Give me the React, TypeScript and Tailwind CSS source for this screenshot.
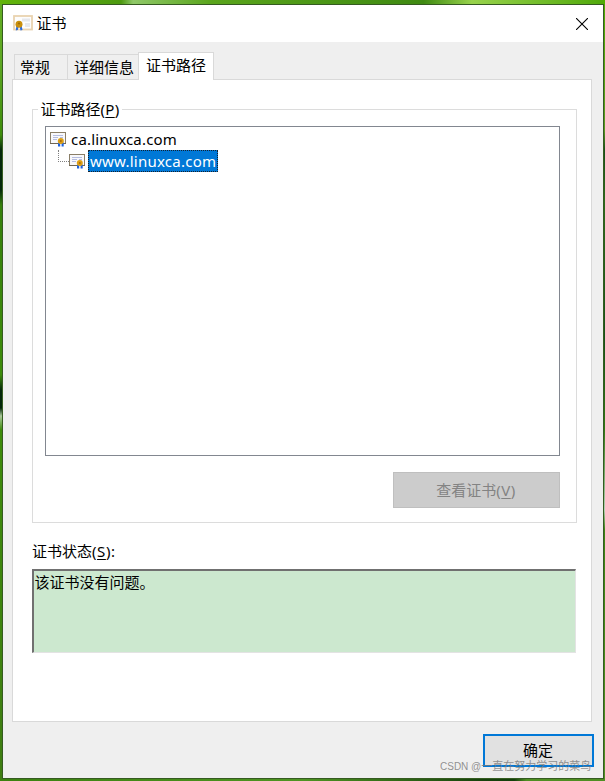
import React from "react";

const Seal = ({ x, y }: { x: number; y: number }) => (
  <g transform={`translate(${x} ${y})`}>
    <path d="M-2.8 1.5V5.5H-.6V2H.8V5.5H2.9V1.5Z" fill="#1d62df" />
    <circle r="3" fill="#dd9f14" />
    <circle r="1" fill="#a86a0c" />
  </g>
);

const TreeIcon = () => (
  <svg width="17" height="15" viewBox="0 0 17 15" className="shrink-0">
    <rect x="0.5" y="0.5" width="15" height="11" fill="#f8f8fb" stroke="#8a7e67" />
    <path d="M0 11.5h16" stroke="#6f6552" />
    <path d="M3 3.5h10M3 5.5h5M10 5.5h3M3 7.5h4" stroke="#b5bde0" />
    <Seal x={10.8} y={9} />
  </svg>
);

const TitleIcon = () => (
  <svg width="20" height="17" viewBox="0 0 20 17" className="shrink-0">
    <rect x="1" y="1" width="18" height="13.5" fill="#fdfdfd" stroke="#e9d3b0" strokeWidth="1.8" />
    <path d="M9 3.5h8v3H9zM12 8h5v4h-5z" fill="#e6e8ec" />
    <path d="M3.5 10L2.8 15.5l2-.5.7-3h1.2l.8 3.5 2-.5L8.5 10z" fill="#2b6de0" />
    <circle cx="6" cy="9.2" r="3.5" fill="#c98f0c" />
    <circle cx="6" cy="8.5" r="1.1" fill="#9e6d08" />
  </svg>
);

export default function App() {
  return (
    <div className="relative h-[781px] w-[605px] overflow-hidden bg-[linear-gradient(180deg,#62ad22_0px,#5fa823_60px,#3d8b0a_135px,#04280a_150px,#04280a_190px,#36800b_205px,#3d8b0a_375px,#04280a_390px,#04280a_408px,#a9c99a_416px,#3d8b0a_430px,#3f7d12_781px)] font-['Noto_Sans','Noto_Sans_CJK_SC',sans-serif] text-[15px] leading-5 text-black">
      <div className="absolute top-0 left-0 h-1 w-full bg-[linear-gradient(90deg,#62b50b,#4d9a10_20%,#8fc868_22%,#5aa51c_35%,#3f8a12_70%,#98d34c_78%,#4fa80a)]" />
      <div className="absolute top-0 right-0 h-full w-[2px] bg-[linear-gradient(180deg,#4fae00_0px,#5a9a20_130px,#175018_150px,#2d6b1a_200px,#175018_340px,#317a12_430px,#b5cfb5_510px,#3c8512_530px,#529024_781px)]" />
      <div className="absolute bottom-0 left-0 h-[2px] w-full bg-[linear-gradient(90deg,#3b8110,#4e9422_50%,#16420d_80%,#13400b_85%,#4e8e22_87%)]" />

      <div className="relative ml-[2px] flex h-[779px] w-[602px] flex-col pt-1">
        <div className="flex h-[775px] flex-col border border-[#355b21] bg-[#efefef]">
          <header className="flex h-[37px] shrink-0 items-center bg-white pr-[15px] pl-[10px]">
            <TitleIcon />
            <span className="mb-[2px] ml-[3.5px]">证书</span>
            <svg width="12" height="12" viewBox="0 0 12 12" className="ml-auto">
              <path d="M0 0L12 12M12 0L0 12" stroke="#000" strokeWidth="1.1" />
            </svg>
          </header>

          <nav className="relative z-10 mt-[10px] -mb-px ml-[11px] flex h-7 shrink-0 items-end">
            <div className="mb-px h-[25px] w-[53px] border-t border-l border-[#d9d9d9] pt-[2px] pl-[5px]">常规</div>
            <div className="mb-px h-[25px] w-[71px] border-t border-l border-[#d9d9d9] pt-[2px] pl-[6px] whitespace-nowrap">详细信息</div>
            <div className="h-7 w-[76px] border border-b-0 border-[#d9d9d9] bg-white pt-[2px] pl-[7px] whitespace-nowrap">证书路径</div>
          </nav>

          <main className="ml-[9px] h-[643px] w-[580px] shrink-0 border border-[#d9d9d9] bg-white pl-[19px]">
            <fieldset className="mt-[19px] h-[424px] w-[545px] border-0">
              <div className="h-[10px]" />
              <div className="h-[414px] border border-[#dcdcdc] px-3">
                <div className="-mt-[11px] -ml-[7px] flex h-[27px] items-start">
                  <span className="bg-white pr-[2px] pl-[2.5px] whitespace-nowrap">
                    证书路径<span className="tracking-[0.3px]">(<u className="underline-offset-2">P</u>)</span>
                  </span>
                </div>
                <div className="h-[330px] w-[515px] border border-[#828790] bg-white pt-[2px] pl-1">
                  <div className="flex h-[21px] items-center">
                    <TreeIcon />
                    <span className="mb-px ml-1 tracking-[0.18px]">ca.linuxca.com</span>
                  </div>
                  <div className="flex h-[22px] items-center">
                    <div className="mb-[10px] ml-2 h-[12px] w-[11px] border-b border-l border-dotted border-[#808080]" />
                    <TreeIcon />
                    <span className="ml-[2px] flex h-[22px] w-[130px] items-center border border-dotted border-[#16202c] bg-[#0078d7] pb-px pl-px tracking-[0.24px] whitespace-nowrap text-white">
                      www.linuxca.com
                    </span>
                  </div>
                </div>
                <button className="mt-4 ml-[348px] block h-9 w-[167px] border border-[#bfbfbf] bg-[#cccccc] pr-[1px] text-[#838383]">
                  查看证书<span className="tracking-[0.5px]">(<u className="underline-offset-2">V</u>)</span>
                </button>
              </div>
            </fieldset>
            <div className="mt-[18px] h-[28px]">
              证书状态<span className="tracking-[0.55px]">(<u className="underline-offset-2">S</u>):</span>
            </div>
            <div className="h-[84px] w-[544px] border-t-2 border-r border-b border-l-2 border-t-[#707070] border-r-[#e3e3e3] border-b-[#e3e3e3] border-l-[#707070] bg-[#cce8cf] pt-px pl-[0.5px]">
              该证书没有问题。
            </div>
          </main>

          <button className="mt-3 ml-[480px] h-[33px] w-[111px] shrink-0 border-2 border-[#0078d7] bg-[#e1e1e1] pr-px pb-px">确定</button>
        </div>
      </div>
      <div className="absolute top-[758px] left-[440px] font-['Liberation_Sans','Noto_Sans_CJK_SC',sans-serif] text-[11px] leading-4 whitespace-nowrap text-[#777777]/80">
        <span className="text-[10px]">CSDN @</span>一直在努力学习的菜鸟
      </div>
    </div>
  );
}
